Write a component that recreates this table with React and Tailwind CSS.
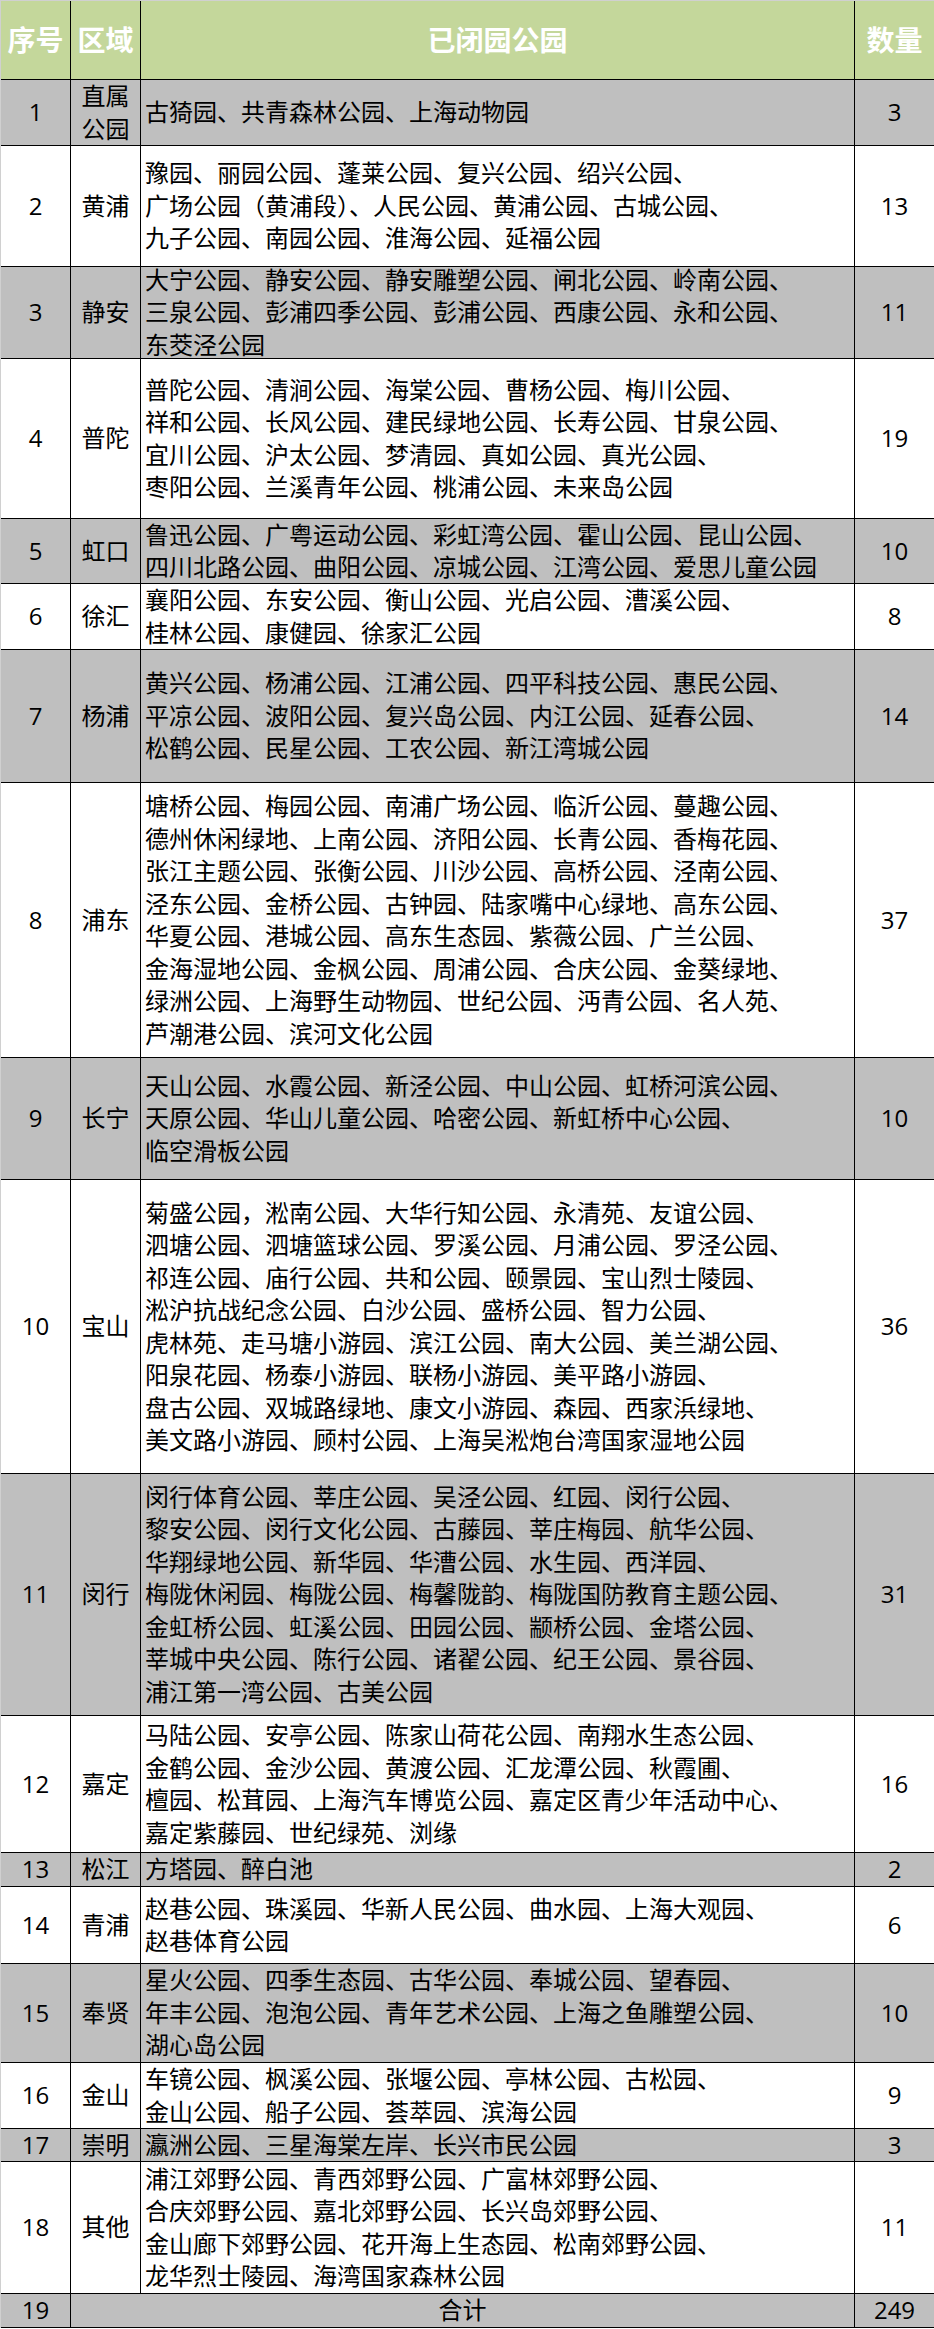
const rows = [
  {
    no: "1",
    area: ["直属", "公园"],
    parks: ["古猗园、共青森林公园、上海动物园"],
    count: "3",
    h: "h-[66px]",
  },
  {
    no: "2",
    area: ["黄浦"],
    parks: [
      "豫园、丽园公园、蓬莱公园、复兴公园、绍兴公园、",
      "广场公园（黄浦段）、人民公园、黄浦公园、古城公园、",
      "九子公园、南园公园、淮海公园、延福公园",
    ],
    count: "13",
    h: "h-[121px]",
  },
  {
    no: "3",
    area: ["静安"],
    parks: [
      "大宁公园、静安公园、静安雕塑公园、闸北公园、岭南公园、",
      "三泉公园、彭浦四季公园、彭浦公园、西康公园、永和公园、",
      "东茭泾公园",
    ],
    count: "11",
    h: "h-[92px]",
  },
  {
    no: "4",
    area: ["普陀"],
    parks: [
      "普陀公园、清涧公园、海棠公园、曹杨公园、梅川公园、",
      "祥和公园、长风公园、建民绿地公园、长寿公园、甘泉公园、",
      "宜川公园、沪太公园、梦清园、真如公园、真光公园、",
      "枣阳公园、兰溪青年公园、桃浦公园、未来岛公园",
    ],
    count: "19",
    h: "h-[160px]",
  },
  {
    no: "5",
    area: ["虹口"],
    parks: [
      "鲁迅公园、广粤运动公园、彩虹湾公园、霍山公园、昆山公园、",
      "四川北路公园、曲阳公园、凉城公园、江湾公园、爱思儿童公园",
    ],
    count: "10",
    h: "h-[65px]",
  },
  {
    no: "6",
    area: ["徐汇"],
    parks: [
      "襄阳公园、东安公园、衡山公园、光启公园、漕溪公园、",
      "桂林公园、康健园、徐家汇公园",
    ],
    count: "8",
    h: "h-[66px]",
  },
  {
    no: "7",
    area: ["杨浦"],
    parks: [
      "黄兴公园、杨浦公园、江浦公园、四平科技公园、惠民公园、",
      "平凉公园、波阳公园、复兴岛公园、内江公园、延春公园、",
      "松鹤公园、民星公园、工农公园、新江湾城公园",
    ],
    count: "14",
    h: "h-[133px]",
  },
  {
    no: "8",
    area: ["浦东"],
    parks: [
      "塘桥公园、梅园公园、南浦广场公园、临沂公园、蔓趣公园、",
      "德州休闲绿地、上南公园、济阳公园、长青公园、香梅花园、",
      "张江主题公园、张衡公园、川沙公园、高桥公园、泾南公园、",
      "泾东公园、金桥公园、古钟园、陆家嘴中心绿地、高东公园、",
      "华夏公园、港城公园、高东生态园、紫薇公园、广兰公园、",
      "金海湿地公园、金枫公园、周浦公园、合庆公园、金葵绿地、",
      "绿洲公园、上海野生动物园、世纪公园、沔青公园、名人苑、",
      "芦潮港公园、滨河文化公园",
    ],
    count: "37",
    h: "h-[275px]",
  },
  {
    no: "9",
    area: ["长宁"],
    parks: [
      "天山公园、水霞公园、新泾公园、中山公园、虹桥河滨公园、",
      "天原公园、华山儿童公园、哈密公园、新虹桥中心公园、",
      "临空滑板公园",
    ],
    count: "10",
    h: "h-[122px]",
  },
  {
    no: "10",
    area: ["宝山"],
    parks: [
      "菊盛公园，淞南公园、大华行知公园、永清苑、友谊公园、",
      "泗塘公园、泗塘篮球公园、罗溪公园、月浦公园、罗泾公园、",
      "祁连公园、庙行公园、共和公园、颐景园、宝山烈士陵园、",
      "淞沪抗战纪念公园、白沙公园、盛桥公园、智力公园、",
      "虎林苑、走马塘小游园、滨江公园、南大公园、美兰湖公园、",
      "阳泉花园、杨泰小游园、联杨小游园、美平路小游园、",
      "盘古公园、双城路绿地、康文小游园、森园、西家浜绿地、",
      "美文路小游园、顾村公园、上海吴淞炮台湾国家湿地公园",
    ],
    count: "36",
    h: "h-[294px]",
  },
  {
    no: "11",
    area: ["闵行"],
    parks: [
      "闵行体育公园、莘庄公园、吴泾公园、红园、闵行公园、",
      "黎安公园、闵行文化公园、古藤园、莘庄梅园、航华公园、",
      "华翔绿地公园、新华园、华漕公园、水生园、西洋园、",
      "梅陇休闲园、梅陇公园、梅馨陇韵、梅陇国防教育主题公园、",
      "金虹桥公园、虹溪公园、田园公园、颛桥公园、金塔公园、",
      "莘城中央公园、陈行公园、诸翟公园、纪王公园、景谷园、",
      "浦江第一湾公园、古美公园",
    ],
    count: "31",
    h: "h-[242px]",
  },
  {
    no: "12",
    area: ["嘉定"],
    parks: [
      "马陆公园、安亭公园、陈家山荷花公园、南翔水生态公园、",
      "金鹤公园、金沙公园、黄渡公园、汇龙潭公园、秋霞圃、",
      "檀园、松茸园、上海汽车博览公园、嘉定区青少年活动中心、",
      "嘉定紫藤园、世纪绿苑、浏缘",
    ],
    count: "16",
    h: "h-[137px]",
  },
  {
    no: "13",
    area: ["松江"],
    parks: ["方塔园、醉白池"],
    count: "2",
    h: "h-[34px]",
  },
  {
    no: "14",
    area: ["青浦"],
    parks: ["赵巷公园、珠溪园、华新人民公园、曲水园、上海大观园、", "赵巷体育公园"],
    count: "6",
    h: "h-[77px]",
  },
  {
    no: "15",
    area: ["奉贤"],
    parks: [
      "星火公园、四季生态园、古华公园、奉城公园、望春园、",
      "年丰公园、泡泡公园、青年艺术公园、上海之鱼雕塑公园、",
      "湖心岛公园",
    ],
    count: "10",
    h: "h-[99px]",
  },
  {
    no: "16",
    area: ["金山"],
    parks: [
      "车镜公园、枫溪公园、张堰公园、亭林公园、古松园、",
      "金山公园、船子公园、荟萃园、滨海公园",
    ],
    count: "9",
    h: "h-[66px]",
  },
  {
    no: "17",
    area: ["崇明"],
    parks: ["瀛洲公园、三星海棠左岸、长兴市民公园"],
    count: "3",
    h: "h-[33px]",
  },
  {
    no: "18",
    area: ["其他"],
    parks: [
      "浦江郊野公园、青西郊野公园、广富林郊野公园、",
      "合庆郊野公园、嘉北郊野公园、长兴岛郊野公园、",
      "金山廊下郊野公园、花开海上生态园、松南郊野公园、",
      "龙华烈士陵园、海湾国家森林公园",
    ],
    count: "11",
    h: "h-[132px]",
  },
];

// one row of the sheet, fixed height like an Excel row
const Row = ({ row, gray }) => {
  return (
    <div
      className={`flex ${row.h} border-b border-black ${gray ? "bg-[#bfbfbf]" : "bg-white"}`}
    >
      <div className="w-[70px] shrink-0 flex items-center justify-center border-r border-black">
        {row.no}
      </div>
      <div className="w-[70px] shrink-0 flex flex-col items-center justify-center border-r border-black">
        {row.area.map((a) => (
          <div key={a} className="whitespace-nowrap">
            {a}
          </div>
        ))}
      </div>
      <div className="w-[714px] shrink-0 flex flex-col justify-center pl-[4px] border-r border-black">
        {row.parks.map((p, i) => (
          <div key={i} className="whitespace-nowrap">
            {p}
          </div>
        ))}
      </div>
      <div className="flex-1 flex items-center justify-center">{row.count}</div>
    </div>
  );
};

export default function App() {
  return (
    <div className="w-[934px] bg-white font-['Open_Sans','Noto_Sans_CJK_SC',sans-serif] text-[24px] leading-[32.5px] text-black">
      <div className="border-l border-t border-[#d0d0d0]">
        {/* header */}
        <div className="flex h-[79px] border-b border-black bg-[#c4d79b] text-[28px] font-bold text-white">
          <div className="w-[70px] shrink-0 flex items-center justify-center border-r border-black">
            序号
          </div>
          <div className="w-[70px] shrink-0 flex items-center justify-center border-r border-black">
            区域
          </div>
          <div className="w-[714px] shrink-0 flex items-center justify-center border-r border-black">
            已闭园公园
          </div>
          <div className="flex-1 flex items-center justify-center">数量</div>
        </div>

        {rows.map((row, i) => (
          <Row key={row.no} row={row} gray={i % 2 === 0} />
        ))}

        {/* total */}
        <div className="flex h-[34px] border-b border-black bg-[#bfbfbf]">
          <div className="w-[70px] shrink-0 flex items-center justify-center border-r border-black">
            19
          </div>
          <div className="w-[784px] shrink-0 flex items-center justify-center border-r border-black">
            合计
          </div>
          <div className="flex-1 flex items-center justify-center">249</div>
        </div>
      </div>
    </div>
  );
}
